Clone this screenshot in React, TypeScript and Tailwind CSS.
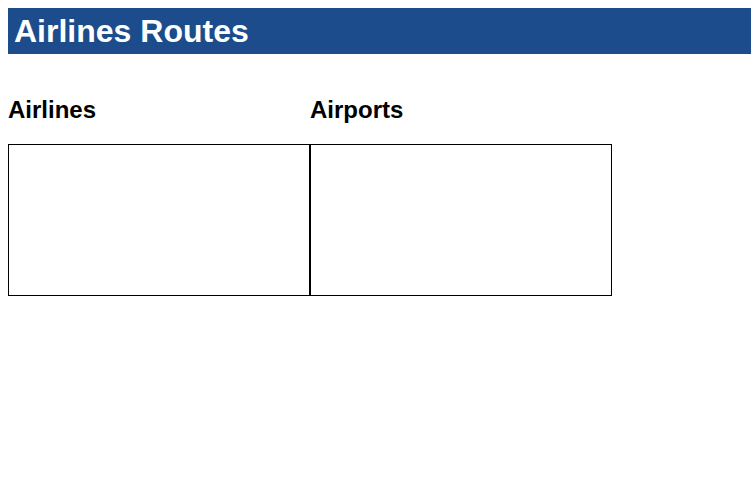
const Column = ({ title }: { title: string }) => {
  return (
    <div className="w-[302px] shrink-0">
      <h2 className="mt-[42px] mb-[20px] text-[24px] font-bold leading-[28px] text-black">{title}</h2>
      <div className="h-[152px] border border-black bg-white" />
    </div>
  );
};

export default function App() {
  return (
    <div className="min-h-screen bg-white p-2 font-['Liberation_Sans',Arial,sans-serif]">
      {/* Title bar */}
      <div className="mr-[-8px] flex h-[46px] items-center bg-[#1c4c8c] pl-[6px]">
        <h1 className="text-[32px] font-bold leading-[37px] text-white">Airlines Routes</h1>
      </div>

      <div className="flex">
        <Column title="Airlines" />
        <Column title="Airports" />
      </div>
    </div>
  );
}
